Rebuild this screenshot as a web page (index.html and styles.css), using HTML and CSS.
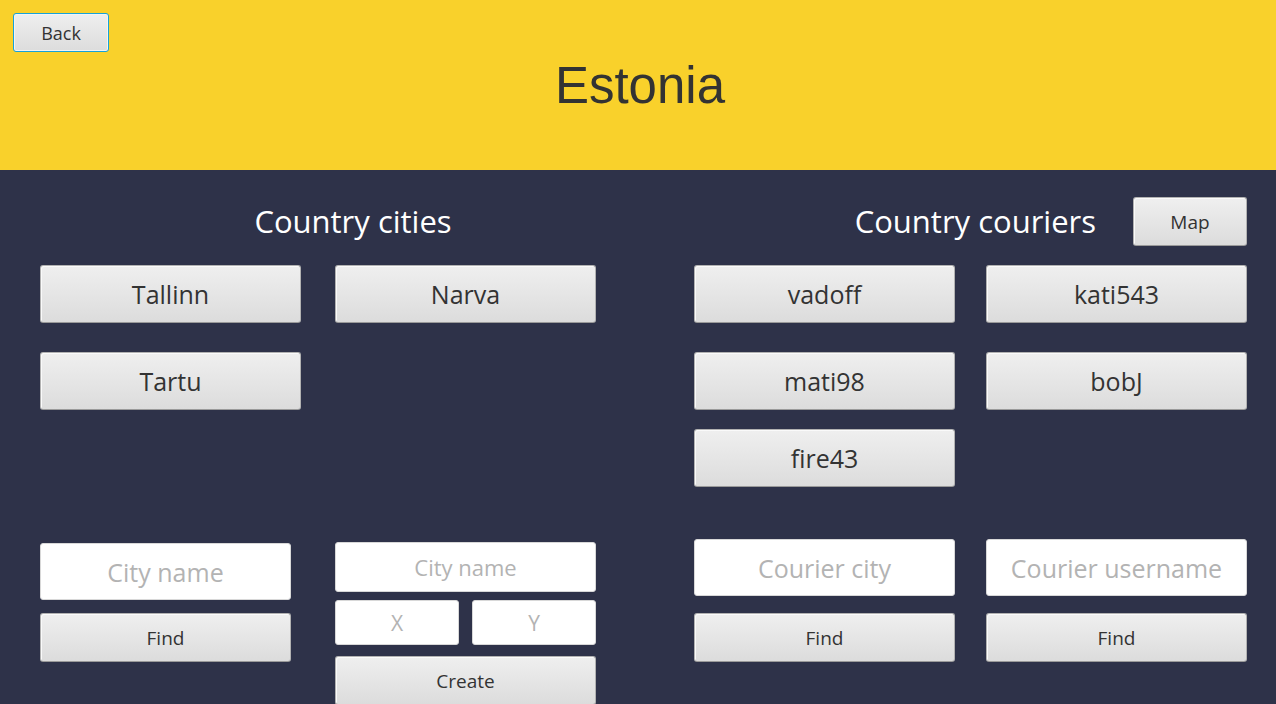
FILE: index.html
```html
<!DOCTYPE html>
<html lang="en">
<head>
<meta charset="utf-8">
<title>Estonia</title>
<link rel="stylesheet" href="styles.css">
</head>
<body>
<header class="top">
  <button class="btn btn-back">Back</button>
  <h1 class="title">Estonia</h1>
</header>
<main class="main">
  <section class="panel panel-cities">
    <div class="head head-cities"><h2 class="head-text">Country cities</h2></div>
    <div class="list list-cities">
      <button class="btn btn-item">Tallinn</button>
      <button class="btn btn-item">Narva</button>
      <button class="btn btn-item">Tartu</button>
    </div>
    <div class="forms">
      <div class="form form-find-city">
        <input class="field field-big" placeholder="City name">
        <button class="btn btn-find">Find</button>
      </div>
      <div class="form form-create">
        <input class="field field-mid" placeholder="City name">
        <div class="xy">
          <input class="field field-xy" placeholder="X">
          <input class="field field-xy" placeholder="Y">
        </div>
        <button class="btn btn-find btn-create">Create</button>
      </div>
    </div>
  </section>
  <section class="panel panel-couriers">
    <div class="head head-couriers">
      <h2 class="head-text">Country couriers</h2>
      <button class="btn btn-map">Map</button>
    </div>
    <div class="list list-couriers">
      <button class="btn btn-item">vadoff</button>
      <button class="btn btn-item">kati543</button>
      <button class="btn btn-item">mati98</button>
      <button class="btn btn-item">bobJ</button>
      <button class="btn btn-item btn-third">fire43</button>
    </div>
    <div class="forms forms-couriers">
      <div class="form">
        <input class="field field-big field-courier" placeholder="Courier city">
        <button class="btn btn-find btn-find-c">Find</button>
      </div>
      <div class="form">
        <input class="field field-big field-courier" placeholder="Courier username">
        <button class="btn btn-find btn-find-c">Find</button>
      </div>
    </div>
  </section>
</main>
</body>
</html>
```

FILE: styles.css
```css
* { box-sizing: border-box; }
html, body { margin: 0; padding: 0; }
body {
  width: 1276px;
  height: 704px;
  overflow: hidden;
  background: #2e3249;
  font-family: "Open Sans", "Noto Sans", sans-serif;
}
.top {
  height: 170px;
  background: #f9d12b;
  padding: 13px 9px 0 13px;
}
.title {
  margin: 0;
  margin-top: 4px;
  text-align: center;
  font-family: "Liberation Sans", Arial, sans-serif;
  font-weight: normal;
  font-size: 51px;
  line-height: 60px;
  color: #333333;
}
.btn {
  display: flex;
  align-items: center;
  justify-content: center;
  padding: 0;
  margin: 0;
  font-family: "Open Sans", "Noto Sans", sans-serif;
  color: #333333;
  background: linear-gradient(#efefef, #dcdcdc);
  border: 1px solid #b2b2b2;
  border-bottom-color: #9a9a9a;
  border-radius: 3px;
  box-shadow: inset 1px 1px 0 #fafafa;
  cursor: pointer;
}
.btn-back {
  width: 96px;
  height: 39px;
  font-size: 18px;
  border: 1px solid #17a2d8;
  box-shadow: inset 0 0 0 1px #f4f4f4;
}
.main {
  display: flex;
  padding-top: 27px;
  height: 534px;
}
.panel { display: flex; flex-direction: column; }
.panel > * { flex-shrink: 0; }
.panel-cities { margin-left: 40px; width: 556px; }
.panel-couriers { margin-left: 98px; width: 553px; }
.head {
  height: 49px;
  display: flex;
  align-items: center;
}
.head-cities { padding-left: 70px; justify-content: center; }
.head-couriers { justify-content: flex-end; }
.head-text {
  margin: 0;
  font-weight: normal;
  font-size: 31px;
  color: #ffffff;
  line-height: 49px;
}
.head-couriers .head-text { margin-right: 37px; }
.btn-map {
  width: 114px;
  height: 49px;
  font-size: 19px;
}
.list {
  margin-top: 19px;
  height: 274px;
  display: grid;
  grid-template-columns: 261px 261px;
  grid-auto-rows: 58px;
  align-content: start;
  align-items: start;
}
.list-cities { column-gap: 34px; row-gap: 29px; }
.list-couriers { column-gap: 31px; row-gap: 29px; }
.btn-item { font-size: 25px; height: 58px; }
.btn-third { margin-top: -10px; }
.forms { display: flex; }
.form { display: flex; flex-direction: column; }
.form-find-city { width: 251px; padding-top: 4px; }
.form-create { width: 261px; margin-left: 44px; padding-top: 3px; }
.field {
  display: block;
  width: 100%;
  margin: 0;
  background: #ffffff;
  border: 1px solid #d8d8d8;
  border-radius: 3px;
  text-align: center;
  font-family: "Open Sans", "Noto Sans", sans-serif;
  color: #333333;
  outline: none;
  flex-shrink: 0;
}
.field::placeholder { color: #b3b3b3; }
.field-big { height: 57px; font-size: 25px; }
.field-mid { height: 50px; font-size: 22px; }
.xy { display: flex; gap: 13px; margin-top: 8px; flex-shrink: 0; }
.field-xy { width: 124px; height: 45px; font-size: 21px; }
.btn-find { height: 49px; font-size: 19px; width: 100%; margin-top: 13px; flex-shrink: 0; }
.btn-create { margin-top: 11px; }
.forms-couriers { gap: 31px; }
.forms-couriers .form { width: 261px; }
.btn-find-c { margin-top: 17px; }
```
